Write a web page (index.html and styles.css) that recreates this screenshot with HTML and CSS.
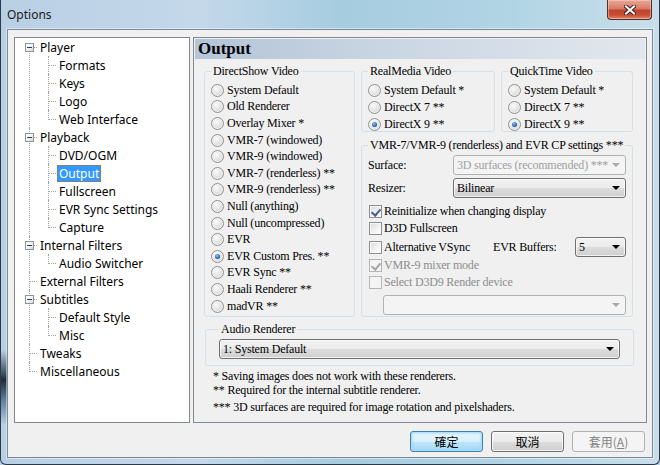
FILE: index.html
```html
<!DOCTYPE html>
<html lang="en">
  <head>
    <meta charset="UTF-8" />
    <title>Options</title>
    <link rel="stylesheet" href="styles.css">
  </head>
  <body>
    <div class="window">
      <div class="titlebar">
        <span class="title">Options</span>
        <div class="close-btn">
          <svg width="12" height="10" viewBox="0 0 12 10">
            <path d="M2 1.5 L10 8.5 M10 1.5 L2 8.5" stroke="#3b2420" stroke-width="4" stroke-linecap="square" fill="none"/>
            <path d="M2 1.5 L10 8.5 M10 1.5 L2 8.5" stroke="#fff" stroke-width="2" stroke-linecap="square" fill="none"/>
          </svg>
        </div>
      </div>

      <div class="client">
        <div class="main">
          <ul class="tree">
            <li>
              <span class="toggle"></span>
              <div class="row"><span class="label">Player</span></div>
              <ul>
                <li><div class="row"><span class="label">Formats</span></div></li>
                <li><div class="row"><span class="label">Keys</span></div></li>
                <li><div class="row"><span class="label">Logo</span></div></li>
                <li><div class="row"><span class="label">Web Interface</span></div></li>
              </ul>
            </li>
            <li>
              <span class="toggle"></span>
              <div class="row"><span class="label">Playback</span></div>
              <ul>
                <li><div class="row"><span class="label">DVD/OGM</span></div></li>
                <li><div class="row"><span class="label selected">Output</span></div></li>
                <li><div class="row"><span class="label">Fullscreen</span></div></li>
                <li><div class="row"><span class="label">EVR Sync Settings</span></div></li>
                <li><div class="row"><span class="label">Capture</span></div></li>
              </ul>
            </li>
            <li>
              <span class="toggle"></span>
              <div class="row"><span class="label">Internal Filters</span></div>
              <ul>
                <li><div class="row"><span class="label">Audio Switcher</span></div></li>
              </ul>
            </li>
            <li><div class="row"><span class="label">External Filters</span></div></li>
            <li>
              <span class="toggle"></span>
              <div class="row"><span class="label">Subtitles</span></div>
              <ul>
                <li><div class="row"><span class="label">Default Style</span></div></li>
                <li><div class="row"><span class="label">Misc</span></div></li>
              </ul>
            </li>
            <li><div class="row"><span class="label">Tweaks</span></div></li>
            <li><div class="row"><span class="label">Miscellaneous</span></div></li>
          </ul>

          <div class="panel">
            <div class="panel-header">Output</div>

            <div class="groups">
              <fieldset class="group directshow">
                <legend>DirectShow Video</legend>
                <div class="radio-list">
                  <div class="opt"><span class="radio"></span>System Default</div>
                  <div class="opt"><span class="radio"></span>Old Renderer</div>
                  <div class="opt"><span class="radio"></span>Overlay Mixer *</div>
                  <div class="opt"><span class="radio"></span>VMR-7 (windowed)</div>
                  <div class="opt"><span class="radio"></span>VMR-9 (windowed)</div>
                  <div class="opt"><span class="radio"></span>VMR-7 (renderless) **</div>
                  <div class="opt"><span class="radio"></span>VMR-9 (renderless) **</div>
                  <div class="opt"><span class="radio"></span>Null (anything)</div>
                  <div class="opt"><span class="radio"></span>Null (uncompressed)</div>
                  <div class="opt"><span class="radio"></span>EVR</div>
                  <div class="opt"><span class="radio checked"></span>EVR Custom Pres. **</div>
                  <div class="opt"><span class="radio"></span>EVR Sync **</div>
                  <div class="opt"><span class="radio"></span>Haali Renderer **</div>
                  <div class="opt"><span class="radio"></span>madVR **</div>
                </div>
              </fieldset>

              <fieldset class="group small">
                <legend>RealMedia Video</legend>
                <div class="radio-list">
                  <div class="opt"><span class="radio"></span>System Default *</div>
                  <div class="opt"><span class="radio"></span>DirectX 7 **</div>
                  <div class="opt"><span class="radio checked"></span>DirectX 9 **</div>
                </div>
              </fieldset>

              <fieldset class="group small">
                <legend>QuickTime Video</legend>
                <div class="radio-list">
                  <div class="opt"><span class="radio"></span>System Default *</div>
                  <div class="opt"><span class="radio"></span>DirectX 7 **</div>
                  <div class="opt"><span class="radio checked"></span>DirectX 9 **</div>
                </div>
              </fieldset>

              <fieldset class="group vmr">
                <legend>VMR-7/VMR-9 (renderless) and EVR CP settings ***</legend>
                <div class="field-row surface">
                  <span class="field-label">Surface:</span>
                  <div class="combo disabled"><span class="combo-text">3D surfaces (recommended) ***</span></div>
                </div>
                <div class="field-row resizer">
                  <span class="field-label">Resizer:</span>
                  <div class="combo"><span class="combo-text">Bilinear</span></div>
                </div>
                <div class="check-row reinit"><span class="check checked"></span>Reinitialize when changing display</div>
                <div class="check-row"><span class="check"></span>D3D Fullscreen</div>
                <div class="buffers-row">
                  <div class="check-row"><span class="check"></span>Alternative VSync</div>
                  <span class="field-label">EVR Buffers:</span>
                  <div class="combo"><span class="combo-text">5</span></div>
                </div>
                <div class="check-row mixer is-disabled"><span class="check checked"></span>VMR-9 mixer mode</div>
                <div class="check-row select-dev is-disabled"><span class="check"></span>Select D3D9 Render device</div>
                <div class="combo disabled device"><span class="combo-text"></span></div>
              </fieldset>
            </div>

            <fieldset class="group audio">
              <legend>Audio Renderer</legend>
              <div class="combo"><span class="combo-text">1: System Default</span></div>
            </fieldset>

            <div class="notes">
              <div class="note n1">* Saving images does not work with these renderers.</div>
              <div class="note n2">** Required for the internal subtitle renderer.</div>
              <div class="note n3">*** 3D surfaces are required for image rotation and pixelshaders.</div>
            </div>
          </div>
        </div>

        <div class="buttons">
          <button class="btn default">確定</button>
          <button class="btn">取消</button>
          <button class="btn" disabled>套用(<u>A</u>)</button>
        </div>
      </div>
    </div>
  </body>
</html>
```

FILE: styles.css
```css
* {
  box-sizing: border-box;
}

html, body {
  margin: 0;
  padding: 0;
}

body {
  width: 660px;
  height: 465px;
  overflow: hidden;
  font-family: "Liberation Serif", serif;
  font-size: 12px;
  letter-spacing: -0.2px;
  color: #000;
  background: #b9d3e6;
}

/* window frame */

.window {
  width: 660px;
  height: 465px;
  display: flex;
  flex-direction: column;
  padding: 0 6px 6px;
  border: 1px solid #2c3a48;
  border-top: none;
  border-radius: 0 0 6px 6px;
  background:
    linear-gradient(180deg, transparent 350px, #1d2c3b 380px, #5f7f9c 400px, transparent 425px) left top / 7px 100% no-repeat,
    linear-gradient(90deg, #b9cfe4 0%, #c4d8ea 30%, #a6cce0 52%, #b2d5e5 78%, #c8deea 100%);
}

.titlebar {
  height: 29px;
  display: flex;
  align-items: flex-start;
}

.title {
  margin-top: 7px;
  font-family: "Noto Sans", sans-serif;
  font-size: 12px;
  line-height: 16px;
  letter-spacing: 0;
  color: #1a1a1a;
}

.close-btn {
  margin-left: auto;
  margin-right: 1px;
  width: 45px;
  height: 20px;
  display: flex;
  align-items: center;
  justify-content: center;
  border: 1px solid #5b2a22;
  border-top: none;
  border-radius: 0 0 4px 4px;
  background: linear-gradient(180deg, #e9a898 0%, #d77b68 45%, #c2432d 55%, #c84f36 80%, #de8a6c 100%);
  box-shadow: inset 0 0 0 1px rgba(255, 220, 210, 0.45);
}

.client {
  flex: 1;
  display: flex;
  flex-direction: column;
  padding: 7px 5px 5px 6px;
  background: #f0f0f0;
  border: 1px solid #7b8a99;
  box-shadow: 0 0 0 1px rgba(255, 255, 255, 0.45);
}

.main {
  flex: 1;
  min-height: 0;
  display: flex;
  gap: 3px;
}

/* tree */

.tree {
  width: 176px;
  margin: 0;
  padding: 0;
  list-style: none;
  background: #fff;
  border: 1px solid #828790;
  font-family: "Noto Sans", sans-serif;
  font-size: 12px;
  letter-spacing: 0;
}

.tree ul {
  margin: 0;
  padding: 0;
  list-style: none;
}

.tree li {
  position: relative;
}

.tree .row {
  height: 18px;
  display: flex;
  align-items: center;
}

.tree > li > .row {
  padding-left: 23px;
}

.tree li li .row {
  padding-left: 42px;
}

.tree .label {
  display: inline-block;
  height: 17px;
  line-height: 15px;
  padding: 0 1px;
  border: 1px dotted transparent;
}

.tree .label.selected {
  background: #3399ff;
  color: #fff;
  border-color: #cc6600;
}

.tree > li::before,
.tree li li::before {
  content: "";
  position: absolute;
  top: 9px;
  width: 8px;
  border-top: 1px dotted #a0a0a0;
}

.tree > li::after,
.tree li li::after {
  content: "";
  position: absolute;
  top: 0;
  height: 100%;
  border-left: 1px dotted #a0a0a0;
}

.tree > li::before,
.tree > li::after {
  left: 14px;
}

.tree li li::before,
.tree li li::after {
  left: 33px;
}

.tree > li:first-child::after {
  top: 9px;
  height: calc(100% - 9px);
}

.tree > li:last-child::after,
.tree li li:last-child::after {
  height: 10px;
}

.toggle {
  position: absolute;
  z-index: 1;
  left: 10px;
  top: 5px;
  width: 9px;
  height: 9px;
  border: 1px solid #919191;
  background: linear-gradient(135deg, #ffffff 30%, #d8d8d8 100%);
}

.toggle::after {
  content: "";
  position: absolute;
  left: 1px;
  top: 3px;
  width: 5px;
  height: 1px;
  background: #1e3f73;
}

/* right panel */

.panel {
  flex: 1;
  min-width: 0;
  border: 1px solid #828790;
}

.panel-header {
  margin: 1px;
  height: 20px;
  padding-left: 3px;
  line-height: 20px;
  font-size: 17px;
  font-weight: bold;
  letter-spacing: 0;
  color: #000;
  background: linear-gradient(90deg, #b3c5d8 0%, #cdd8e4 50%, #e1e7ee 100%);
}

.groups {
  display: grid;
  grid-template-columns: 151px 134px 132px;
  grid-template-rows: 68px 179px;
  gap: 6px;
  margin: 5px 12px 0 10px;
}

.directshow {
  grid-row: 1 / 3;
}

.vmr {
  grid-column: 2 / 4;
}

.group {
  margin: 0;
  padding: 0 6px;
  min-width: 0;
  border: 1px solid #d5dfe5;
  border-radius: 3px;
}

.group legend {
  padding: 0 2px;
  line-height: 14px;
  white-space: nowrap;
}

.radio-list {
  margin-top: 4px;
}

.opt {
  height: 16.6px;
  display: flex;
  align-items: center;
  gap: 3px;
  white-space: nowrap;
}

.small .opt {
  height: 17px;
}

.radio {
  position: relative;
  flex: none;
  width: 13px;
  height: 13px;
  border-radius: 50%;
  border: 1px solid #909090;
  background: radial-gradient(circle at 40% 35%, #fbfbfb 0%, #e6e6e6 45%, #cdcdcd 100%);
  box-shadow: inset 0 0 0 1px rgba(255, 255, 255, 0.6);
}

.radio.checked::after {
  content: "";
  position: absolute;
  left: 3px;
  top: 3px;
  width: 5px;
  height: 5px;
  border-radius: 50%;
  background: radial-gradient(circle at 40% 35%, #8fc4f0 0%, #2f6db5 55%, #123d77 100%);
}

/* vmr settings */

.field-row {
  height: 20px;
  display: flex;
  align-items: center;
}

.field-row .field-label {
  width: 85px;
}

.field-row .combo {
  flex: 1;
}

.surface {
  margin-top: 3px;
}

.resizer {
  margin-top: 3px;
}

.check-row {
  height: 17px;
  display: flex;
  align-items: center;
  gap: 2px;
  padding-left: 1px;
  white-space: nowrap;
}

.reinit {
  margin-top: 5px;
}

.check {
  position: relative;
  flex: none;
  width: 13px;
  height: 13px;
  border: 1px solid #8f8f8f;
  background: linear-gradient(135deg, #d9d9d9 0%, #f3f3f3 60%, #ffffff 100%);
  box-shadow: inset 0 0 0 1px #f6f6f6;
}

.check.checked::after {
  content: "";
  position: absolute;
  left: 3px;
  top: 1px;
  width: 4px;
  height: 7px;
  border: solid #4a5f97;
  border-width: 0 2px 2px 0;
  transform: rotate(40deg);
}

.buffers-row {
  height: 20px;
  display: grid;
  grid-template-columns: 125px 82px 51px;
  align-items: center;
}

.mixer {
  height: 16px;
}

.select-dev {
  height: 19px;
}

.is-disabled {
  color: #8d8d8d;
}

.is-disabled .check {
  border-color: #b5b5b5;
  background: #f4f4f4;
  box-shadow: none;
}

.is-disabled .check.checked::after {
  border-color: #a6a6a6;
}

.device {
  margin: 3px 0 0 15px;
}

/* combo boxes */

.combo {
  position: relative;
  height: 20px;
  display: flex;
  align-items: center;
  padding: 0 16px 0 3px;
  border: 1px solid #707070;
  border-radius: 3px;
  background: linear-gradient(180deg, #f2f2f2 0%, #ebebeb 50%, #dddddd 50%, #cfcfcf 100%);
  box-shadow: inset 0 0 0 1px rgba(255, 255, 255, 0.7);
}

.combo-text {
  flex: 1;
  white-space: nowrap;
  overflow: hidden;
}

.combo::after {
  content: "";
  position: absolute;
  right: 5px;
  top: 7px;
  border-left: 4px solid transparent;
  border-right: 4px solid transparent;
  border-top: 4px solid #000;
}

.combo.disabled {
  border-color: #adb2b5;
  background: #f4f4f4;
  box-shadow: none;
  color: #a0a0a0;
}

.combo.disabled::after {
  border-top-color: #a8a8a8;
}

/* audio + notes */

.audio {
  margin: 5px 12px 0 11px;
  padding: 0 13px 6px;
}

.audio .combo {
  margin-top: 3px;
}

.notes {
  margin-left: 19px;
}

.note {
  line-height: 14px;
  white-space: nowrap;
}

.n1 {
  margin-top: 3px;
}

.n2 {
  margin-top: 0;
}

.n3 {
  margin-top: 3px;
}

/* dialog buttons */

.buttons {
  display: flex;
  justify-content: flex-end;
  gap: 8px;
  margin-top: 8px;
  padding-right: 2px;
}

.btn {
  width: 73px;
  height: 21px;
  padding: 0;
  font-family: "Noto Sans CJK TC", "Noto Sans", sans-serif;
  font-size: 12px;
  line-height: 17px;
  letter-spacing: 0;
  color: #000;
  border: 1px solid #707070;
  border-radius: 3px;
  background: linear-gradient(180deg, #f2f2f2 0%, #ebebeb 50%, #dddddd 50%, #cfcfcf 100%);
  box-shadow: inset 0 0 0 1px rgba(255, 255, 255, 0.75);
}

.btn.default {
  border-color: #3c7fb1;
  background: linear-gradient(180deg, #eaf6fd 0%, #d9f0fc 50%, #bee6fd 50%, #a7d9f5 100%);
  box-shadow: inset 0 0 0 1px #b0e0f8, inset 0 0 2px 2px rgba(120, 200, 240, 0.35);
}

.btn:disabled {
  color: #838383;
  border-color: #adb2b5;
  background: #f4f4f4;
  box-shadow: none;
}
```
